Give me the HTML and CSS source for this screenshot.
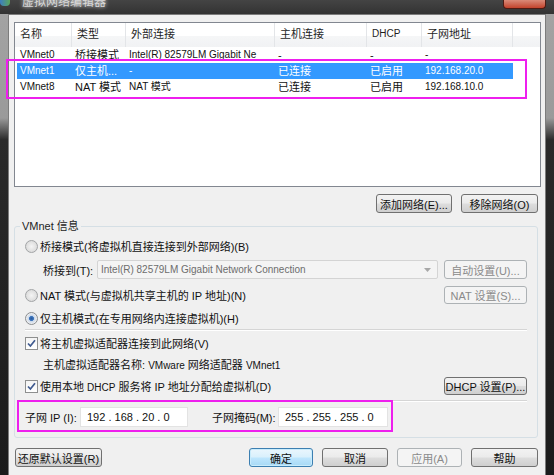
FILE: index.html
```html
<!DOCTYPE html>
<html lang="zh-CN">
<head>
<meta charset="utf-8">
<title>虚拟网络编辑器</title>
<link rel="stylesheet" href="styles.css">
</head>
<body>
<div class="window">
  <div class="titlebar">
    <span class="app-icon"></span>
    <span class="title">虚拟网络编辑器</span>
    <span class="close"></span>
  </div>
  <div class="client">
    <div class="listview">
      <div class="lv-header">
        <div class="hc h1">名称</div>
        <div class="hc h2">类型</div>
        <div class="hc h3">外部连接</div>
        <div class="hc h4">主机连接</div>
        <div class="hc h5">DHCP</div>
        <div class="hc h6">子网地址</div>
        <div class="hc hfill"></div>
      </div>
      <div class="lv-row">
        <div class="c c1">VMnet0</div>
        <div class="c c2">桥接模式</div>
        <div class="c c3">Intel(R) 82579LM Gigabit Ne</div>
        <div class="c c4">-</div>
        <div class="c c5">-</div>
        <div class="c c6">-</div>
      </div>
      <div class="lv-row sel">
        <div class="c c1">VMnet1</div>
        <div class="c c2">仅主机...</div>
        <div class="c c3">-</div>
        <div class="c c4">已连接</div>
        <div class="c c5">已启用</div>
        <div class="c c6">192.168.20.0</div>
      </div>
      <div class="lv-row">
        <div class="c c1">VMnet8</div>
        <div class="c c2">NAT 模式</div>
        <div class="c c3">NAT 模式</div>
        <div class="c c4">已连接</div>
        <div class="c c5">已启用</div>
        <div class="c c6">192.168.10.0</div>
      </div>
    </div>

    <div class="list-buttons">
      <button class="btn w-add">添加网络(E)...</button>
      <button class="btn w-del">移除网络(O)</button>
    </div>

    <fieldset class="group">
      <legend>VMnet 信息</legend>

      <div class="opt r-bridge">
        <span class="radio"></span>
        <span class="otext">桥接模式(将虚拟机直接连接到外部网络)(B)</span>
      </div>

      <div class="opt r-combo">
        <span class="lbl-bridge">桥接到(T):</span>
        <div class="combo">
          <span class="combo-text">Intel(R) 82579LM Gigabit Network Connection</span>
          <svg class="combo-arrow" width="7" height="4" viewBox="0 0 7 4"><path d="M0 0 H7 L3.5 4 Z" fill="#a8a8a8"/></svg>
        </div>
        <button class="btn side" disabled>自动设置(U)...</button>
      </div>

      <div class="opt r-nat">
        <span class="radio"></span>
        <span class="otext">NAT 模式(与虚拟机共享主机的 IP 地址)(N)</span>
        <button class="btn side push" disabled>NAT 设置(S)...</button>
      </div>

      <div class="opt r-host">
        <span class="radio on"></span>
        <span class="otext">仅主机模式(在专用网络内连接虚拟机)(H)</span>
      </div>

      <div class="sep s1"></div>

      <div class="opt r-chk1">
        <span class="check"><svg width="11" height="11" viewBox="0 0 11 11"><path d="M2 5.5 L4.4 8 L9 2.2" fill="none" stroke="#3f5a8f" stroke-width="1.7"/></svg></span>
        <span class="otext">将主机虚拟适配器连接到此网络(V)</span>
      </div>

      <div class="opt r-name">
        <span class="name-text">主机虚拟适配器名称: <span class="small">VMware</span> 网络适配器 <span class="small">VMnet1</span></span>
      </div>

      <div class="opt r-chk2">
        <span class="check"><svg width="11" height="11" viewBox="0 0 11 11"><path d="M2 5.5 L4.4 8 L9 2.2" fill="none" stroke="#3f5a8f" stroke-width="1.7"/></svg></span>
        <span class="otext">使用本地 <span class="small">DHCP</span> 服务将 IP 地址分配给虚拟机(D)</span>
        <button class="btn side push">DHCP 设置(P)...</button>
      </div>

      <div class="sep s2"></div>

      <div class="opt r-subnet">
        <span class="lbl-ip">子网 IP (I):</span>
        <span class="ipbox ip1">192 . 168 . 20 . 0</span>
        <span class="lbl-mask">子网掩码(M):</span>
        <span class="ipbox ip2">255 . 255 . 255 . 0</span>
      </div>
    </fieldset>

    <div class="footer">
      <button class="btn f-reset">还原默认设置(R)</button>
      <button class="btn default f-ok">确定</button>
      <button class="btn f-cancel">取消</button>
      <button class="btn f-apply" disabled>应用(A)</button>
      <button class="btn f-help">帮助</button>
    </div>
  </div>

  <div class="annot annot-list"></div>
  <div class="annot annot-subnet"></div>
</div>
</body>
</html>
```

FILE: styles.css
```css
html, body {
  margin: 0;
  padding: 0;
}
body {
  width: 554px;
  height: 475px;
  overflow: hidden;
  background: linear-gradient(#a4a4a4 0, #9a9a9a 118px, #2a2a2a 140px, #1b1b1b 100%);
  font-family: "Liberation Sans", "Noto Sans CJK SC", sans-serif;
  font-size: 11px;
  color: #111;
}
.window {
  position: relative;
  height: 475px;
  display: flex;
  flex-direction: column;
}
.titlebar {
  height: 14px;
  flex: none;
  display: flex;
  align-items: flex-start;
  overflow: hidden;
  background: linear-gradient(#444 0, #333 100%);
}
.app-icon {
  width: 10px;
  height: 6px;
  background: linear-gradient(90deg, #3d7fc0, #5aa65a);
  border-radius: 0 0 4px 4px;
}
.title {
  margin-left: 12px;
  margin-top: -6px;
  line-height: 16px;
  font-size: 12px;
  color: #d8d8d8;
  text-shadow: 0 0 4px #fff;
}
.close {
  margin-left: auto;
  margin-right: 8px;
  width: 41px;
  height: 8px;
  background: linear-gradient(#d98a78, #c2432c);
  border: 1px solid #4e1a12;
  border-top: none;
  border-radius: 0 0 4px 4px;
}
.client {
  flex: 1;
  margin: 0 8px;
  background: #f0f0f0;
  border: 1px solid #7c7c7c;
  border-bottom: none;
  padding: 7px 4px 0 5px;
}

/* list view */
.listview {
  box-sizing: border-box;
  height: 165px;
  border: 1px solid #828790;
  background: #fff;
  overflow: hidden;
}
.lv-header {
  display: flex;
  height: 24px;
  background: linear-gradient(#ffffff 0, #ffffff 55%, #f5f6f7 56%, #f1f2f4 100%);
}
.hc {
  box-sizing: border-box;
  flex: none;
  line-height: 22px;
  padding-left: 5px;
  border-right: 1px solid #e3e5e8;
  color: #1e1e1e;
  white-space: nowrap;
  overflow: hidden;
  font-size: 11px;
}
.h1 { width: 57px; }
.h2 { width: 54px; }
.h3 { width: 149px; }
.h4 { width: 92px; }
.h5 { width: 55px; font-size: 10px; }
.h6 { width: 91px; }
.hfill { flex: 1; border-right: none; }

.lv-row {
  display: flex;
  height: 16px;
  line-height: 16px;
  margin-left: 2px;
  width: 496px;
}
.lv-row.sel {
  background: #3399ff;
  color: #fff;
}
.c {
  box-sizing: border-box;
  flex: none;
  padding-left: 3px;
  white-space: nowrap;
  overflow: hidden;
  font-size: 10px;
}
.c1 { width: 55px; }
.c2 { width: 54px; font-size: 11px; }
.c3 { width: 149px; }
.c4 { width: 92px; font-size: 11px; }
.c5 { width: 55px; font-size: 11px; }
.c6 { width: 91px; }

/* buttons */
.btn {
  box-sizing: border-box;
  height: 19px;
  padding: 0;
  margin: 0;
  border: 1px solid #707070;
  border-radius: 3px;
  background: linear-gradient(#f2f2f2 0%, #ebebeb 48%, #dddddd 52%, #cfcfcf 100%);
  font-family: "Liberation Sans", "Noto Sans CJK SC", sans-serif;
  font-size: 11px;
  color: #111;
  white-space: nowrap;
  flex: none;
}
.btn:disabled {
  border-color: #adb2b5;
  background: #f4f4f4;
  color: #8a8a8a;
}
.btn.default {
  border-color: #3c7fb1;
  background: linear-gradient(#eaf6fd 0%, #d9f0fc 48%, #bee6fd 52%, #a7d9f5 100%);
  box-shadow: inset 0 0 0 1px #c9ecfc;
}
.list-buttons {
  display: flex;
  justify-content: flex-end;
  gap: 9px;
  margin-top: 7px;
  padding-right: 3px;
}
.w-add { width: 76px; }
.w-del { width: 77px; }

/* group */
.group {
  margin: 5px 3px 0 0;
  padding: 4px 10px 10px 10px;
  border: 1px solid #d5dfe5;
  border-radius: 3px;
  min-inline-size: 0;
}
.group legend {
  padding: 0 2px;
  margin-left: -5px;
  line-height: 16px;
  font-size: 11px;
  color: #1e1e1e;
}
.opt {
  display: flex;
  align-items: center;
  height: 16px;
}
.radio {
  box-sizing: border-box;
  width: 13px;
  height: 13px;
  flex: none;
  border-radius: 50%;
  border: 1px solid #a2a4a6;
  background: radial-gradient(circle at 50% 50%, #f4f4f4 0, #e0e0e0 60%, #d0d0d0 100%);
  margin-right: 2px;
}
.radio.on {
  border-color: #8a8d90;
  background: radial-gradient(circle at 50% 50%, #2b5a9e 0, #3e76bc 28%, #c7d6ea 34%, #f0f0f0 70%, #d6d6d6 100%);
}
.check {
  box-sizing: border-box;
  width: 13px;
  height: 13px;
  flex: none;
  border: 1px solid #8e8f8f;
  background: linear-gradient(#f4f4f4, #ffffff);
  margin-right: 2px;
  display: flex;
  align-items: center;
  justify-content: center;
}
.check svg { display: block; }
.otext { white-space: nowrap; }

.r-combo { margin-top: 6px; height: 19px; }
.lbl-bridge {
  width: 54px;
  padding-left: 18px;
  flex: none;
  white-space: nowrap;
}
.combo {
  box-sizing: border-box;
  width: 341px;
  height: 19px;
  flex: none;
  border: 1px solid #d4d4d4;
  border-radius: 2px;
  background: #f4f4f4;
  display: flex;
  align-items: center;
  padding-left: 3px;
  padding-right: 6px;
}
.combo-text {
  color: #6d6d6d;
  font-size: 10px;
  white-space: nowrap;
}
.combo-arrow { margin-left: auto; display: block; }
.btn.side { width: 83px; margin-left: 6px; }
.btn.push { margin-left: auto; }
.r-nat { margin-top: 7px; height: 18px; }
.r-nat .btn { height: 18px; }
.r-host { margin-top: 6px; }
.sep {
  height: 0;
  border-top: 1px solid #d5d5d5;
  border-bottom: 1px solid #ffffff;
}
.s1 { margin-top: 3px; }
.r-chk1 { margin-top: 4px; }
.r-name { margin-top: 5px; padding-left: 18px; }
.name-text { white-space: nowrap; }
.small { font-size: 10px; }
.r-chk2 { margin-top: 5px; height: 18px; }
.r-chk2 .btn { height: 18px; }
.s2 { margin-top: 5px; }
.r-subnet { margin-top: 5px; height: 20px; }
.lbl-ip { width: 55px; flex: none; white-space: nowrap; }
.lbl-mask { width: 66px; margin-left: 24px; flex: none; white-space: nowrap; }
.ipbox {
  box-sizing: border-box;
  height: 20px;
  line-height: 18px;
  flex: none;
  background: #fff;
  border: 1px solid #e3e3e3;
  padding-left: 6px;
  white-space: pre;
  font-size: 11px;
}
.ip1 { width: 108px; }
.ip2 { width: 110px; }

/* footer */
.footer {
  display: flex;
  margin-top: 10px;
  padding-left: 1px;
  gap: 9px;
}
.f-reset { width: 87px; margin-right: auto; }
.f-ok { width: 64px; }
.f-cancel { width: 66px; }
.f-apply { width: 65px; }
.f-help { width: 67px; margin-right: 3px; }

/* magenta annotation rectangles drawn over the screenshot */
.annot {
  position: absolute;
  box-sizing: border-box;
  border: 2px solid #ee1fee;
  pointer-events: none;
}
.annot-list { left: 6px; top: 59px; width: 521px; height: 40px; }
.annot-subnet { left: 17px; top: 400px; width: 376px; height: 32px; }
```
